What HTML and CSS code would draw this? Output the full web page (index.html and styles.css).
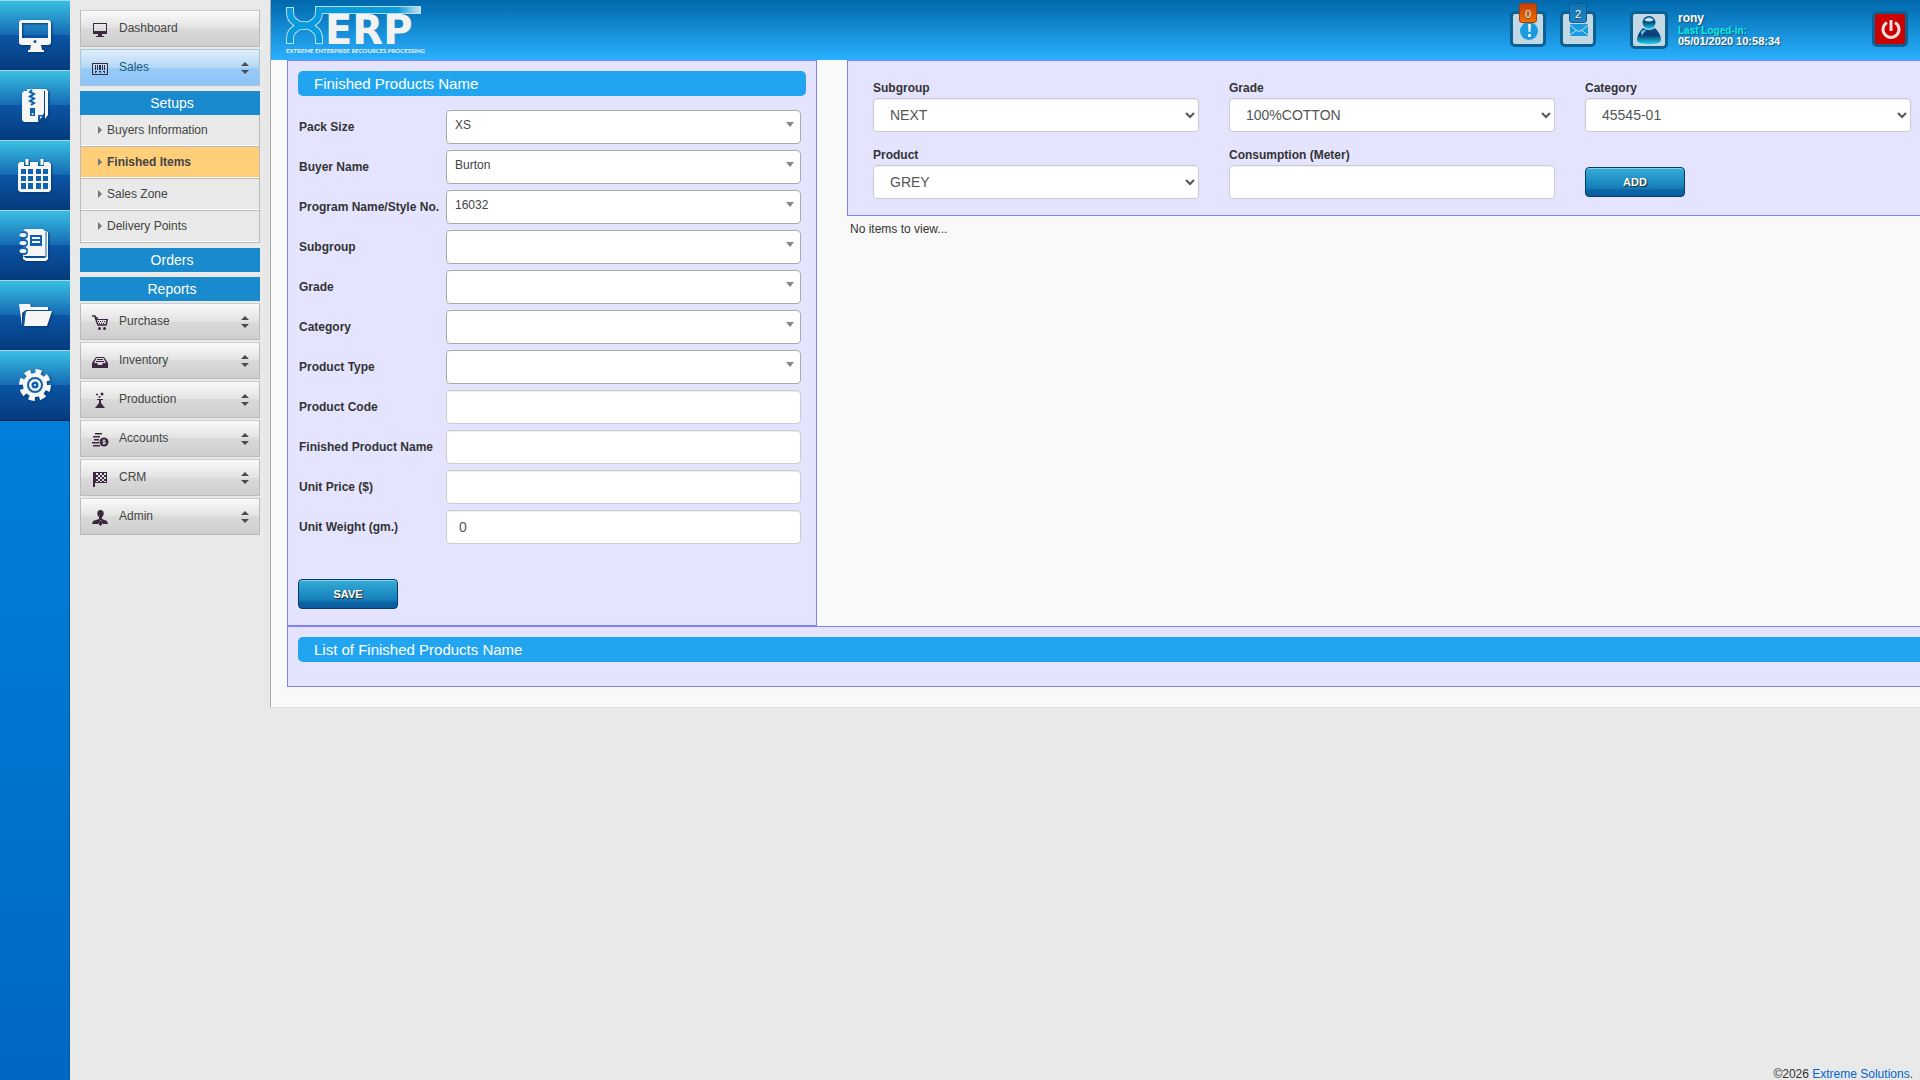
FILE: index.html
```html
<!DOCTYPE html>
<html lang="en">
<head>
<meta charset="utf-8">
<title>XERP - Finished Items</title>
<link rel="stylesheet" href="styles.css">
</head>
<body>
<nav class="rail" aria-label="Shortcuts">
  <a href="#" aria-label="Desktop"><svg viewBox="0 0 70 70"><path fill-rule="evenodd" d="M22 19h26a3 3 0 0 1 3 3v19a3 3 0 0 1-3 3h-7l1 5h2v2H28v-2h2l1-5h-9a3 3 0 0 1-3-3V22a3 3 0 0 1 3-3zm0 3v15h26V22z"/><circle cx="35" cy="40.500" r="1.500" fill="#0a53a2"/></svg></a>
  <a href="#" aria-label="Archive"><svg viewBox="0 0 70 70"><path d="M27 18h19l2 2v24l-3 4V20H27z"/><path d="M24 20h20v22l-6 9H24l-2-2V22z"/><path class="cut" d="M38 51v-7h7z"/><path d="M40 48v-2.500h2.500z"/><path class="cut-line" d="M32 19l-2 2 4 2-4 2.500 4 2-4 2.500 4 2-3 2"/><path class="cut" d="M30 37h5v8h-5z"/><circle cx="32.500" cy="43" r="1"/></svg></a>
  <a href="#" aria-label="Calendar"><svg viewBox="0 0 70 70"><path d="M20 21h4v4h6v-4h8v4h6v-4h5l2 2v26l-2 2H20l-2-2V23z"/><path d="M27 18v6M42 18v6" stroke="#fff" stroke-width="3"/><path class="cut" d="M21 28h5v5h-5zm7 0h5v5h-5zm8 0h5v5h-5zm7 0h5v5h-5zM21 35h5v5h-5zm7 0h5v5h-5zm8 0h5v5h-5zm7 0h5v5h-5zM21 42h5v6h-5zm7 0h5v6h-5zm8 0h5v6h-5zm7 0h5v6h-5z"/></svg></a>
  <a href="#" aria-label="Notebook"><svg viewBox="0 0 70 70"><path d="M25 18h18l2 2 3 1v27l-2 2H26l-3-2v-3l3 2h19v-2H23V20z"/><path d="M46 21v25H26" fill="none" stroke="#0f62ad"/><path class="cut" d="M30 24h12v11H30z"/><path d="M32 26h8v2h-8zm0 4h8v2h-8z"/><g class="rings"><circle cx="24" cy="24" r="4"/><circle cx="24" cy="32" r="4"/><circle cx="24" cy="40" r="4"/></g><g><ellipse cx="23" cy="24" rx="3.500" ry="2"/><ellipse cx="23" cy="32" rx="3.500" ry="2"/><ellipse cx="23" cy="40" rx="3.500" ry="2"/></g></svg></a>
  <a href="#" aria-label="Files"><svg viewBox="0 0 70 70"><path d="M19 23h11l1 3h17v3H26l-4 3v13z"/><path d="M26 30h26l-5 15H24z"/><path d="M23.500 45l1-13 2-2" fill="none" stroke="#0f62ad"/></svg></a>
  <a href="#" aria-label="Settings"><svg viewBox="0 0 70 70"><circle cx="35" cy="34" r="12"/><circle cx="35" cy="34" r="13.500" fill="none" stroke="#f6f6f6" stroke-width="5" stroke-dasharray="6 4.603"/><circle cx="35" cy="34" r="7" fill="none" stroke="#0f62ad" stroke-width="2"/><circle cx="35" cy="34" r="3.500" class="cut"/><circle cx="35" cy="34" r="1"/></svg></a>
</nav>

<nav class="sidebar" aria-label="Modules">
  <a class="module" href="#"><svg viewBox="0 0 16 16"><path fill-rule="evenodd" d="M1 1h14v11h-5v2h2v1H4v-1h2v-2H1zm1 1v7h12V2z"/></svg><span>Dashboard</span></a>
  <a class="module active" href="#"><svg viewBox="0 0 16 16"><path fill-rule="evenodd" d="M0 2h16v12H0zm1 1v10h14V3z"/><path d="M3 4h1v5H3zm2 0h1v5H5zm2 0h2v5H7zm3 0h1v5h-1zm2 0h1v5h-1zM3 10h2v1H4v1H3zm4 0h2v2H8v-1H7zm4 0h2v2h-1v-1h-1z"/></svg><span>Sales</span><i class="sorter"></i></a>
  <h2 class="group">Setups</h2>
  <ul class="links">
    <li><a href="#">Buyers Information</a></li>
    <li><a class="current" href="#">Finished Items</a></li>
    <li><a href="#">Sales Zone</a></li>
    <li><a href="#">Delivery Points</a></li>
  </ul>
  <h2 class="group">Orders</h2>
  <h2 class="group">Reports</h2>
  <a class="module" href="#"><svg viewBox="0 0 16 16"><path d="M0 1h3l1 2h2M3 2l3 8h8l1.500-6" fill="none" stroke="#3b2840" stroke-width="1.500"/><path d="M4 4h11v1H4zm2 2h1v1H6zm2 0h1v1H8zm2 0h1v1h-1zm2 0h1v1h-1zM7 8h1v1H7zm2 0h1v1H9zm2 0h1v1h-1z"/><circle cx="7.500" cy="13.500" r="1.500"/><circle cx="12.500" cy="13.500" r="1.500"/></svg><span>Purchase</span><i class="sorter"></i></a>
  <a class="module" href="#"><svg viewBox="0 0 16 16"><path fill-rule="evenodd" d="M4 3h8l4 6v5H0V9zm.5 1L2 9h3l1 2h4l1-2h3l-2.500-5z"/><path d="M5 5h6v1H5zM4 7h8v1H4z"/></svg><span>Inventory</span><i class="sorter"></i></a>
  <a class="module" href="#"><svg viewBox="0 0 16 16"><path d="M5 6h6v1H9v3l4 5H3l4-5V7H5z"/><circle cx="5" cy="1.500" r="1"/><circle cx="10" cy="1" r="1.500"/><circle cx="7.500" cy="4" r="1"/></svg><span>Production</span><i class="sorter"></i></a>
  <a class="module" href="#"><svg viewBox="0 0 16 16"><path d="M3 1h7v1.500H3zM1 4h7v1.500H1zM2 7h5v1.500H2zM0 10h7v1.500H0zM1 13h7v1.500H1z"/><circle cx="12" cy="10" r="4.500"/><path d="M13.500 8.500h-2.500v1.500h2.500v1.500h-3M12 7v6" fill="none" stroke="#ddd" stroke-width=".8"/></svg><span>Accounts</span><i class="sorter"></i></a>
  <a class="module" href="#"><svg viewBox="0 0 16 16"><path d="M1 1h2v15H1z"/><path fill-rule="evenodd" d="M3 1h12v11H3zm1 1v2h2V2zm4 0v2h2V2zm4 0v2h2V2zM6 4v2h2V4zm4 0v2h2V4zM4 6v2h2V6zm4 0v2h2V6zm4 0v2h2V6zM6 8v2h2V8zm4 0v2h2V8zm-6 2v1h2v-1zm4 0v1h2v-1zm4 0v1h2v-1z"/></svg><span>CRM</span><i class="sorter"></i></a>
  <a class="module" href="#"><svg viewBox="0 0 16 16"><ellipse cx="8.500" cy="3.500" rx="3.200" ry="3.500"/><path d="M7 6h3v3l5 2 1 3h-5l-2.500-4L6 14H0l1-3 6-2z"/><path d="M7.500 11h2l1 3-2 2-2-2z"/></svg><span>Admin</span><i class="sorter"></i></a>
</nav>

<div class="page">
  <div class="sheet">
    <header class="topbar">
      <a class="logo" href="#" aria-label="XERP home">
        <svg class="mark" viewBox="0 0 136 40">
          <defs><linearGradient id="fade"><stop offset="0" stop-color="#079bdd"/><stop offset="1" stop-color="#c9e2ee"/></linearGradient></defs>
          <path d="M4 2v5q0 7 5 10 3 3 9 4 7-1 10-4 5-3 5-10V5h102M4 39v-5q0-7 5-10 3-3 9-4 7 1 10 4 5 3 5 10v5" fill="none" stroke="#b9def3" stroke-width="8"/>
          <path d="M4 3v4q0 7 5 10 3 3 9 4 7-1 10-4 5-3 5-10V5h101M4 38v-4q0-7 5-10 3-3 9-4 7 1 10 4 5 3 5 10v4" fill="none" stroke="#079bdd" stroke-width="6"/>
          <path d="M112 2h22v6h-22z" fill="url(#fade)"/>
        </svg>
        <span class="word">ERP</span>
        <span class="tagline">EXTREME ENTERPRISE RECOURCES PROCESSING</span>
      </a>
      <div class="tools">
        <button class="tile" type="button" aria-label="Alerts"><svg viewBox="0 0 30 30"><circle cx="16" cy="17" r="9" fill="#1a9be0"/><path d="M15 10h3l-.5 8h-2zM15 20h3v3h-3z" fill="#e5eef4"/></svg><span class="badge hot">0</span></button>
        <button class="tile" type="button" aria-label="Messages"><svg viewBox="0 0 30 30"><path d="M7 10h18v12H7z" fill="#1a9be0"/><path d="M7 11l7 6h4l7-6M7 21l7-5M25 21l-7-5" fill="none" stroke="#c4dcea"/></svg><span class="badge">2</span></button>
        <div class="tile avatar"><svg viewBox="0 0 32 32"><defs><linearGradient id="glass" x2="0" y2="1"><stop offset="0" stop-color="#0b4f8c"/><stop offset=".45" stop-color="#0a3f78"/><stop offset="1" stop-color="#14d3ee"/></linearGradient></defs><path d="M10 14Q4 20 4 26q0 4 12 4t12-4q0-6-6-12-6 4-12 0z" fill="url(#glass)"/><circle cx="16" cy="8.500" r="6.500" fill="url(#glass)"/><path d="M11 6q5-5 10 0-5 3-10 0z" fill="#b9e8fa"/><path d="M8 18q3-3 5-2-3 3-4 6z" fill="#6cc8ec"/></svg></div>
        <div class="user"><strong>rony</strong><span class="since">Last Loged-in:</span><span>05/01/2020 10:58:34</span></div>
        <button class="tile power" type="button" aria-label="Log out"><svg viewBox="0 0 30 30"><path d="M12 8.500a8 8 0 1 0 8 0" fill="none" stroke="#e8dede" stroke-width="3"/><path d="M16 6v11" stroke="#e8dede" stroke-width="3"/></svg></button>
      </div>
    </header>

    <main class="content">
      <div class="columns">
        <form class="panel product">
          <h1 class="title">Finished Products Name</h1>
          <div class="fields">
            <label for="pack">Pack Size</label><select class="pick" id="pack"><option>XS</option></select>
            <label for="buyer">Buyer Name</label><select class="pick" id="buyer"><option>Burton</option></select>
            <label for="program">Program Name/Style No.</label><select class="pick" id="program"><option>16032</option></select>
            <label for="subgroup">Subgroup</label><select class="pick" id="subgroup"><option></option></select>
            <label for="grade">Grade</label><select class="pick" id="grade"><option></option></select>
            <label for="category">Category</label><select class="pick" id="category"><option></option></select>
            <label for="type">Product Type</label><select class="pick" id="type"><option></option></select>
            <label for="code">Product Code</label><input class="control" id="code" type="text">
            <label for="name">Finished Product Name</label><input class="control" id="name" type="text">
            <label for="price">Unit Price ($)</label><input class="control" id="price" type="text">
            <label for="weight">Unit Weight (gm.)</label><input class="control" id="weight" type="text" value="0">
          </div>
          <button class="action" type="button">SAVE</button>
        </form>

        <div class="materials">
          <form class="panel mix">
            <div class="cell"><label for="m-subgroup">Subgroup</label><select class="control" id="m-subgroup"><option>NEXT</option></select></div>
            <div class="cell"><label for="m-grade">Grade</label><select class="control" id="m-grade"><option>100%COTTON</option></select></div>
            <div class="cell"><label for="m-category">Category</label><select class="control" id="m-category"><option>45545-01</option></select></div>
            <div class="cell"><label for="m-product">Product</label><select class="control" id="m-product"><option>GREY</option></select></div>
            <div class="cell"><label for="m-use">Consumption (Meter)</label><input class="control" id="m-use" type="text"></div>
            <div class="cell end"><button class="action" type="button">ADD</button></div>
          </form>
          <p class="empty">No items to view...</p>
        </div>
      </div>

      <section class="panel listing">
        <h2 class="title">List of Finished Products Name</h2>
      </section>
    </main>
  </div>
  <footer class="footer">©2026 <a href="#">Extreme Solutions</a>.</footer>
</div>
</body>
</html>
```

FILE: styles.css
```css
* { box-sizing: border-box; }

body {
  margin: 0;
  min-height: 100vh;
  display: flex;
  background: #e9e9e9;
  color: #333;
  font: 12px/16px "Liberation Sans", Arial, sans-serif;
}

a { color: #06c; text-decoration: none; }
h1, h2, p, ul { margin: 0; padding: 0; }
ul { list-style: none; }
button, input, select { font-family: inherit; margin: 0; }
svg { display: block; }

/* Icon rail */
.rail {
  flex: none;
  width: 70px;
  background: linear-gradient(#0090ea, #0068c2);
  border-right: 1px solid #0a5797;
}
.rail a {
  display: block;
  height: 70px;
  margin-right: -1px;
  border-top: 1px solid #a9d6ee;
  background: linear-gradient(#38bfe2, #1569b3 50%, #0b55a5 50%, #053a7c);
}
.rail a:last-child { height: 71px; border-bottom: 1px solid #032448; }
.rail svg { width: 70px; height: 70px; fill: #f6f6f6; filter: drop-shadow(1px 1px 1px #04396f); }
.rail .cut { fill: #0f62ad; }
.rail .cut-line { fill: none; stroke: #0f62ad; stroke-width: 2; }
.rail .rings { fill: #0f62ad; }

/* Module menu */
.sidebar { flex: none; width: 200px; padding: 10px; }
.module {
  display: flex;
  align-items: center;
  height: 37px;
  margin-bottom: 2px;
  padding: 0 10px 0 11px;
  border: 1px solid #bbb;
  border-top-color: #ccc;
  background: linear-gradient(#fafafa, #e2e2e2 50%, #dadada 50%, #cecece);
  color: #444;
}
.module svg { width: 16px; height: 16px; margin: 2px 11px 0 0; fill: #3b2840; overflow: visible; }
.module span { flex: 1; padding-bottom: 2px; }
.module.active {
  border-color: #a9c6d6;
  background: linear-gradient(#e0eefa, #b4d7f6 50%, #9acbf6 50%, #8bc4f8);
  color: #145a80;
}
.sorter { display: grid; gap: 4px; width: 8px; }
.sorter::before, .sorter::after {
  content: "";
  border: 4px solid transparent;
  border-top: 0;
  border-bottom-color: #4c4c4c;
}
.sorter::after { border-top: 4px solid #4c4c4c; border-bottom: 0; }
.group {
  height: 24px;
  margin: 5px 0 0;
  padding-left: 4px;
  background: #188acd;
  color: #fff;
  font-size: 14px;
  font-weight: normal;
  line-height: 24px;
  text-align: center;
}
.group + .module { margin-top: 2px; }
.links { border: solid #bbb; border-width: 0 1px; }
.links li { height: 32px; border-bottom: 1px solid #bbb; }
.links a {
  display: flex;
  align-items: center;
  gap: 5px;
  height: 31px;
  padding: 0 0 1px 17px;
  border-bottom: 1px solid #fff;
  color: #444;
}
.links a::before {
  content: "";
  border: 4px solid transparent;
  border-left-color: #777;
  border-right: 0;
}
.links .current { background: #ffce79; font-weight: bold; }

/* Page */
.page { flex: 1; min-width: 0; display: flex; flex-direction: column; }
.sheet { background: #f9f9f9; border-left: 1px solid #aaa; border-bottom: 1px solid #ddd; }
.topbar {
  display: flex;
  justify-content: space-between;
  height: 60px;
  padding: 0 12px 0 14px;
  background: linear-gradient(#0068ab, #2ab0ff);
}

/* Logo: drawn mark with the word set over it */
.logo { position: relative; display: block; width: 144px; color: #f2f2f2; font-weight: bold; }
.mark { width: 136px; height: 40px; margin: 5px 0 0 1px; }
.word {
  position: absolute;
  left: 40px;
  top: 14px;
  font: bold 40px/32px "DejaVu Sans", sans-serif;
}
.tagline {
  position: absolute;
  left: 1px;
  bottom: 5px;
  font: bold 6px/8px Lato, sans-serif;
  white-space: nowrap;
}

.tools { display: flex; align-items: flex-start; padding-top: 11px; }
.tile {
  position: relative;
  width: 36px;
  height: 36px;
  margin-right: 14px;
  padding: 0;
  border: 3px solid #0b6191;
  border-radius: 5px;
  background: #c2d8e4;
}
.tile svg { width: 30px; height: 30px; }
.badge {
  position: absolute;
  left: 6px;
  top: -11px;
  width: 18px;
  height: 20px;
  border: 1px solid #0a5c92;
  border-radius: 3px;
  background: linear-gradient(#1272b2, #1b86c8);
  color: #fff;
  font-size: 11px;
  line-height: 20px;
  text-align: center;
  text-shadow: 0 1px 1px #333;
}
.badge.hot { border-color: #a33c08; background: linear-gradient(#c93c00, #f07200); }
.tile.avatar { width: 38px; height: 38px; margin: 0 10px 0 20px; }
.avatar svg { width: 32px; height: 32px; }
.user {
  display: flex;
  flex-direction: column;
  width: 180px;
  margin-right: 14px;
  color: #fff;
  font-size: 11px;
  font-weight: bold;
  line-height: 11px;
  text-shadow: 1px 1px 1px #24506e;
}
.user strong { font-size: 12px; line-height: 14px; }
.user .since { color: #00f0e8; font-size: 10px; }
.tile.power { margin: 0; background: #c00; }

.content { padding: 0 0 20px 16px; }
.columns { display: flex; align-items: flex-start; }
.panel { border: 1px solid #8080ff; background: #e4e4ff; }
.title {
  height: 25px;
  padding-left: 16px;
  border-radius: 5px;
  background: #22a5f1;
  color: #fff;
  font-size: 15px;
  font-weight: normal;
  line-height: 25px;
}
.product { flex: 0 0 530px; padding: 10px 10px 16px; }
.fields {
  display: grid;
  grid-template-columns: 148px 1fr;
  row-gap: 6px;
  align-items: center;
  margin: 14px 5px 35px 0;
}
label { color: #333; font-weight: bold; }
.fields label { padding-left: 1px; }

.pick, .control {
  width: 100%;
  height: 34px;
  border: 1px solid #ccc;
  border-radius: 4px;
  background: #fff;
}
.pick {
  appearance: none;
  padding: 0 8px 4px;
  border-color: #aaa;
  background: #fff url("data:image/svg+xml,%3Csvg xmlns='http://www.w3.org/2000/svg' width='8' height='5'%3E%3Cpath d='M0 0h8L4 5z' fill='%23888'/%3E%3C/svg%3E") no-repeat right 6px top 11px;
  color: #444;
  font-size: 12px;
}
.control {
  padding: 6px 12px;
  color: #555;
  font-size: 14px;
  box-shadow: inset 0 1px 1px #00000013;
}
select.control { padding-right: 0; }

.action {
  display: block;
  width: 100px;
  height: 30px;
  border: 1px solid #063a66;
  border-radius: 4px;
  background: linear-gradient(#34add6, #167fba 70%, #0c64a6 80%, #0a5c9e);
  box-shadow: inset 0 1px 0 #86cde6;
  color: #fff;
  font-size: 11px;
  font-weight: bold;
  text-shadow: 1px 1px 1px #222;
}

.materials { flex: 1; min-width: 0; margin-left: 30px; }
.mix {
  display: grid;
  grid-template-columns: repeat(3, 1fr);
  gap: 14px 30px;
  padding: 18px 9px 16px 25px;
  border-right: 0;
}
.cell label { display: block; height: 19px; padding-top: 1px; }
.cell.end { padding-top: 21px; }
.empty { padding: 5px 3px; }
.listing { padding: 10px 0 24px 10px; border-right: 0; }
.listing .title { border-radius: 5px 0 0 5px; }

.footer { margin-top: auto; padding: 0 7px 0 0; line-height: 12px; text-align: right; }
```
